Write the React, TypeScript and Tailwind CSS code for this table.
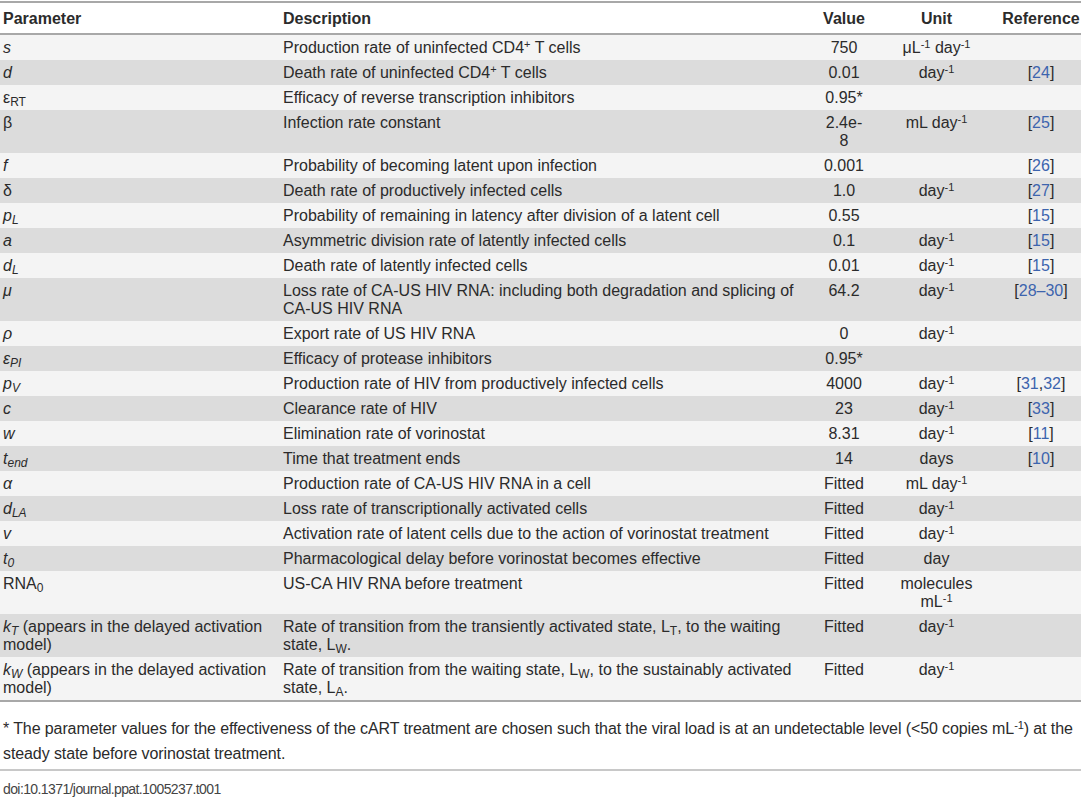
import React from "react";

const link = "text-[#3c64ae]";
const sup = "text-[11px]";
const sub = "text-[12px]";

function Day() {
  return (
    <>
      day<sup className={sup}>-1</sup>
    </>
  );
}

function Ref({ items }: { items: string[] }) {
  return (
    <>
      [
      {items.map((it, i) => (
        <React.Fragment key={i}>
          {i > 0 && ","}
          <span className={link}>{it}</span>
        </React.Fragment>
      ))}
      ]
    </>
  );
}

interface Row {
  param: React.ReactNode;
  desc: React.ReactNode;
  value: React.ReactNode;
  unit?: React.ReactNode;
  refs?: React.ReactNode;
}

const rows: Row[] = [
  { param: <i>s</i>, desc: <>Production rate of uninfected CD4<sup className={sup}>+</sup> T cells</>, value: "750", unit: <>μL<sup className={sup}>-1</sup> day<sup className={sup}>-1</sup></> },
  { param: <i>d</i>, desc: <>Death rate of uninfected CD4<sup className={sup}>+</sup> T cells</>, value: "0.01", unit: <Day />, refs: <Ref items={["24"]} /> },
  { param: <>ε<sub className={sub}>RT</sub></>, desc: "Efficacy of reverse transcription inhibitors", value: "0.95*" },
  { param: "β", desc: "Infection rate constant", value: <>2.4e-<br />8</>, unit: <>mL <Day /></>, refs: <Ref items={["25"]} /> },
  { param: <i>f</i>, desc: "Probability of becoming latent upon infection", value: "0.001", refs: <Ref items={["26"]} /> },
  { param: "δ", desc: "Death rate of productively infected cells", value: "1.0", unit: <Day />, refs: <Ref items={["27"]} /> },
  { param: <i>p<sub className={sub}>L</sub></i>, desc: "Probability of remaining in latency after division of a latent cell", value: "0.55", refs: <Ref items={["15"]} /> },
  { param: <i>a</i>, desc: "Asymmetric division rate of latently infected cells", value: "0.1", unit: <Day />, refs: <Ref items={["15"]} /> },
  { param: <i>d<sub className={sub}>L</sub></i>, desc: "Death rate of latently infected cells", value: "0.01", unit: <Day />, refs: <Ref items={["15"]} /> },
  {
    param: <i>μ</i>,
    desc: <>Loss rate of CA-US HIV RNA: including both degradation and splicing of <span className="whitespace-nowrap">CA-US</span> HIV RNA</>,
    value: "64.2",
    unit: <Day />,
    refs: <>[<span className={link}>28–30</span>]</>,
  },
  { param: <i>ρ</i>, desc: "Export rate of US HIV RNA", value: "0", unit: <Day /> },
  { param: <i>ε<sub className={sub}>PI</sub></i>, desc: "Efficacy of protease inhibitors", value: "0.95*" },
  { param: <i>p<sub className={sub}>V</sub></i>, desc: "Production rate of HIV from productively infected cells", value: "4000", unit: <Day />, refs: <Ref items={["31", "32"]} /> },
  { param: <i>c</i>, desc: "Clearance rate of HIV", value: "23", unit: <Day />, refs: <Ref items={["33"]} /> },
  { param: <i>w</i>, desc: "Elimination rate of vorinostat", value: "8.31", unit: <Day />, refs: <Ref items={["11"]} /> },
  { param: <i>t<sub className={sub}>end</sub></i>, desc: "Time that treatment ends", value: "14", unit: "days", refs: <Ref items={["10"]} /> },
  { param: <i>α</i>, desc: "Production rate of CA-US HIV RNA in a cell", value: "Fitted", unit: <>mL <Day /></> },
  { param: <i>d<sub className={sub}>LA</sub></i>, desc: "Loss rate of transcriptionally activated cells", value: "Fitted", unit: <Day /> },
  { param: <i>v</i>, desc: "Activation rate of latent cells due to the action of vorinostat treatment", value: "Fitted", unit: <Day /> },
  { param: <i>t<sub className={sub}>0</sub></i>, desc: "Pharmacological delay before vorinostat becomes effective", value: "Fitted", unit: "day" },
  { param: <>RNA<sub className={sub}>0</sub></>, desc: "US-CA HIV RNA before treatment", value: "Fitted", unit: <>molecules<br />mL<sup className={sup}>-1</sup></> },
  {
    param: <><i>k<sub className={sub}>T</sub></i> (appears in the delayed activation<br />model)</>,
    desc: <>Rate of transition from the transiently activated state, L<sub className={sub}>T</sub>, to the waiting<br />state, L<sub className={sub}>W</sub>.</>,
    value: "Fitted",
    unit: <Day />,
  },
  {
    param: <><i>k<sub className={sub}>W</sub></i> (appears in the delayed activation<br />model)</>,
    desc: <>Rate of transition from the waiting state, L<sub className={sub}>W</sub>, to the sustainably activated<br />state, L<sub className={sub}>A</sub>.</>,
    value: "Fitted",
    unit: <Day />,
  },
];

export default function App() {
  return (
    <div className="w-[1081px] bg-white text-[#2b2b2b] font-['Liberation_Sans',Arial,sans-serif] text-[16px] pt-[1px]">
      <table className="w-full table-fixed border-collapse leading-[18px]">
        <colgroup>
          <col className="w-[279px]" />
          <col className="w-[537px]" />
          <col className="w-[56px]" />
          <col className="w-[129px]" />
          <col className="w-[80px]" />
        </colgroup>
        <thead>
          <tr className="border-t-2 border-b-2 border-[#a8a8a8] h-[32px]">
            <th className="text-left font-bold pl-[3px] pt-[2px]">Parameter</th>
            <th className="text-left font-bold pl-[4px] pt-[2px]">Description</th>
            <th className="text-center font-bold px-[4px] pt-[2px]">Value</th>
            <th className="text-center font-bold px-[24px] pt-[2px]">Unit</th>
            <th className="text-center font-bold px-0 pt-[2px]">Reference</th>
          </tr>
        </thead>
        <tbody>
          {rows.map((r, i) => (
            <tr key={i} className={i % 2 === 0 ? "bg-[#f4f4f4] align-top" : "bg-[#dcdcdc] align-top"}>
              <td className="pl-[3px] pr-[2px] pt-[4px] pb-[3px] whitespace-nowrap">{r.param}</td>
              <td className="pl-[4px] pr-[6px] pt-[4px] pb-[3px]">{r.desc}</td>
              <td className="px-[4px] pt-[4px] pb-[3px] text-center">{r.value}</td>
              <td className="px-[24px] pt-[4px] pb-[3px] text-center">{r.unit}</td>
              <td className="px-0 pt-[4px] pb-[3px] text-center">{r.refs}</td>
            </tr>
          ))}
        </tbody>
      </table>
      <div className="border-t-2 border-[#a8a8a8] pt-[14px] pb-[3px] pl-[3px] leading-[25px] tracking-[-0.1px] whitespace-nowrap">
        * The parameter values for the effectiveness of the cART treatment are chosen such that the viral load is at an undetectable level (&lt;50 copies mL<sup className={sup}>-1</sup>) at the
        <br />
        steady state before vorinostat treatment.
      </div>
      <div className="border-t-2 border-[#c8c8c8] pt-[9px] pl-[3px] text-[14px] leading-[18px] tracking-[-0.6px] text-[#444]">
        doi:10.1371/journal.ppat.1005237.t001
      </div>
    </div>
  );
}
